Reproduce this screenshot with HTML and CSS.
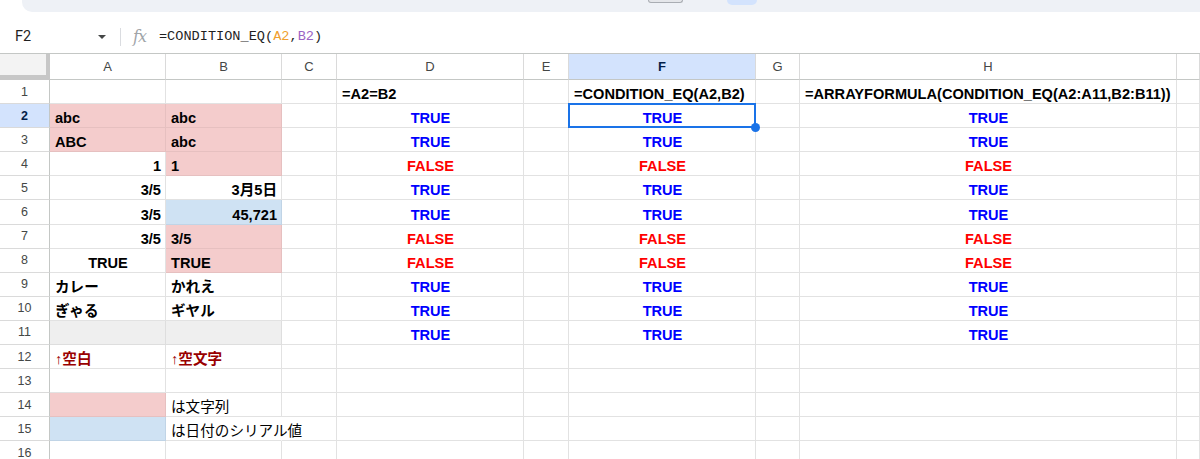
FILE: index.html
```html
<!DOCTYPE html>
<html lang="ja">
<head>
    <meta charset="UTF-8">
    <meta name="viewport" content="width=device-width, initial-scale=1.0">
    <title>CONDITION_EQ</title>
    <link rel="stylesheet" href="styles.css">
</head>
<body>

    <!-- bottom edge of the toolbar -->
    <div class="toolbar-tail">
        <div class="zoom-btn"></div>
        <div class="mode-btn"></div>
    </div>

    <div class="formula-bar">
        <div class="name-box">
            <span>F2</span>
            <span class="caret"></span>
        </div>
        <div class="bar-divider"></div>
        <span class="fx">fx</span>
        <span class="formula">=CONDITION_EQ(<span class="ref-a">A2</span>,<span class="ref-b">B2</span>)</span>
    </div>

    <div class="sheet" id="sheet"></div>

    <script>
        const COLS = ['A', 'B', 'C', 'D', 'E', 'F', 'G', 'H', 'I'];

        const cells = {
            D1: { text: '=A2=B2' },
            F1: { text: '=CONDITION_EQ(A2,B2)' },
            H1: { text: '=ARRAYFORMULA(CONDITION_EQ(A2:A11,B2:B11))' },
            A2: { text: 'abc', cls: 'pink' },
            B2: { text: 'abc', cls: 'pink' },
            A3: { text: 'ABC', cls: 'pink' },
            B3: { text: 'abc', cls: 'pink' },
            A4: { text: '1', cls: 'align-right' },
            B4: { text: '1', cls: 'pink' },
            A5: { text: '3/5', cls: 'align-right' },
            B5: { text: '3月5日', cls: 'align-right' },
            A6: { text: '3/5', cls: 'align-right' },
            B6: { text: '45,721', cls: 'align-right blue' },
            A7: { text: '3/5', cls: 'align-right' },
            B7: { text: '3/5', cls: 'pink' },
            A8: { text: 'TRUE', cls: 'align-center' },
            B8: { text: 'TRUE', cls: 'pink' },
            A9: { text: 'カレー' },
            B9: { text: 'かれえ' },
            A10: { text: 'ぎゃる' },
            B10: { text: 'ギヤル' },
            A11: { cls: 'gray' },
            B11: { cls: 'gray' },
            A12: { text: '↑空白', cls: 'note' },
            B12: { text: '↑空文字', cls: 'note' },
            A14: { cls: 'pink' },
            B14: { text: 'は文字列', cls: 'plain' },
            A15: { cls: 'blue' },
            B15: { text: 'は日付のシリアル値', cls: 'plain overflow' }
        };

        // D, F and H give the same answers for rows 2-11
        const results = [true, true, false, true, true, false, false, true, true, true];
        results.forEach((ok, i) => {
            ['D', 'F', 'H'].forEach(col => {
                cells[col + (i + 2)] = {
                    text: ok ? 'TRUE' : 'FALSE',
                    cls: 'align-center ' + (ok ? 'is-true' : 'is-false')
                };
            });
        });
        cells.F2.cls += ' selected';

        const sheet = document.getElementById('sheet');

        function add(cls, text) {
            let el = document.createElement('div');
            el.className = cls;
            if (text) el.textContent = text;
            sheet.appendChild(el);
        }

        add('corner');
        COLS.forEach(c => add('col-head' + (c === 'F' ? ' active' : ''), c === 'I' ? '' : c));

        for (let r = 1; r <= 16; r++) {
            add('row-head' + (r === 2 ? ' active' : ''), String(r));
            COLS.forEach(c => {
                let cell = cells[c + r] || {};
                add('cell ' + (cell.cls || ''), cell.text);
            });
        }
    </script>

</body>
</html>
```

FILE: styles.css
```css
body {
    margin: 0;
    font-family: "Liberation Sans", Arial, "Noto Sans CJK JP", sans-serif;
    background: #fff;
    overflow: hidden;
}

/* Toolbar edge */
.toolbar-tail {
    height: 12px;
    margin-left: 22px;
    background: #eef1f6;
    border-bottom-left-radius: 10px;
    display: flex;
    align-items: flex-start;
}

.zoom-btn {
    margin-left: 626px;
    width: 33px;
    height: 2px;
    background: #e4e6ea;
    border: 1px solid #a9adb3;
    border-top: none;
    border-radius: 0 0 4px 4px;
}

.mode-btn {
    margin-left: 44px;
    width: 30px;
    height: 5px;
    background: #d3e3fd;
    border-radius: 0 0 6px 6px;
}

/* Formula bar */
.formula-bar {
    height: 41px;
    padding-top: 8px;
    box-sizing: border-box;
    display: flex;
    align-items: center;
}

.name-box {
    width: 120px;
    padding-left: 15px;
    box-sizing: border-box;
    display: flex;
    align-items: center;
    font-family: Roboto, "Liberation Sans", sans-serif;
    font-size: 14.5px;
    color: #1f1f1f;
}

.caret {
    margin-left: auto;
    margin-right: 14px;
    width: 0;
    height: 0;
    border-left: 4px solid transparent;
    border-right: 4px solid transparent;
    border-top: 4px solid #444746;
}

.bar-divider {
    width: 1px;
    height: 18px;
    background: #dadce0;
}

.fx {
    margin-left: 12px;
    font-family: "DejaVu Serif", serif;
    font-style: italic;
    font-size: 16px;
    color: #a0a4a8;
    letter-spacing: -1px;
}

.formula {
    margin-left: 13px;
    font-family: "Liberation Mono", monospace;
    font-size: 13.6px;
    color: #1f1f1f;
}

.ref-a {
    color: #f0a030;
}

.ref-b {
    color: #9b63c4;
}

/* Grid */
.sheet {
    display: grid;
    grid-template-columns: 50px 116px 116px 55px 187px 45px 187px 44px 377px 1fr;
    grid-template-rows: 26px repeat(16, 24.1px);
    border-top: 1px solid #c4c7c5;
}

.corner {
    background: #f3f3f3;
    border-right: 4px solid #c7c7c7;
    border-bottom: 5px solid #c7c7c7;
}

.col-head,
.row-head {
    display: flex;
    align-items: center;
    justify-content: center;
    color: #444746;
    background: #fff;
}

.col-head {
    font-size: 13px;
    border-right: 1px solid #dadada;
    border-bottom: 1px solid #c4c7c5;
}

.row-head {
    font-size: 12.5px;
    border-right: 1px solid #c4c7c5;
    border-bottom: 1px solid #dadada;
}

.col-head.active,
.row-head.active {
    background: #d3e3fd;
    color: #041e49;
    font-weight: 700;
}

.cell {
    display: flex;
    align-items: flex-end;
    padding: 0 4px 0 5px;
    line-height: 17px;
    font-size: 14.6px;
    font-weight: 700;
    color: #000;
    white-space: nowrap;
    border-right: 1px solid #e2e2e2;
    border-bottom: 1px solid #e2e2e2;
}

.cell.pink {
    background: #f4cccc;
    border-color: #e6c0c0;
}

.cell.blue {
    background: #cfe2f3;
    border-color: #c0d4e6;
}

.cell.gray {
    background: #efefef;
    border-color: #dedede;
}

.align-right {
    justify-content: flex-end;
}

.align-center {
    justify-content: center;
}

.is-true {
    color: #0000ff;
}

.is-false {
    color: #ff0000;
}

.note {
    color: #990000;
}

.plain {
    font-weight: 400;
}

.overflow {
    border-right-color: transparent;
}

/* Active cell */
.selected {
    position: relative;
}

.selected::before {
    content: "";
    position: absolute;
    left: -1px;
    top: -1px;
    right: -1px;
    bottom: -1px;
    border: 2px solid #1a73e8;
}

.selected::after {
    content: "";
    position: absolute;
    right: -5px;
    bottom: -5px;
    width: 9px;
    height: 9px;
    border-radius: 50%;
    background: #1a73e8;
}
```
